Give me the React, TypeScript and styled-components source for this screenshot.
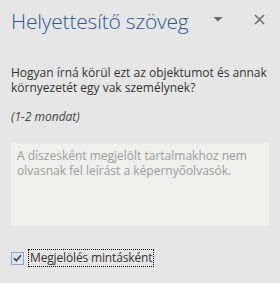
import React from 'react';
import styled, {createGlobalStyle} from 'styled-components';

const GlobalStyle = createGlobalStyle`
  html, body {
    margin: 0;
    padding: 0;
    background: #e6e6e6;
  }
  * {
    box-sizing: border-box;
  }
`;

const Pane = styled.div`
  width: 280px;
  height: 283px;
  background: #e6e6e6;
  font-family: 'Open Sans', 'Noto Sans', sans-serif;
  overflow: hidden;
`;

const Header = styled.div`
  display: flex;
  align-items: flex-start;
  padding: 7px 4px 0 11px;
`;

const Title = styled.h1`
  flex: 1;
  margin: 0;
  font-size: 21px;
  font-weight: 300;
  line-height: 28px;
  color: #2b579a;
  letter-spacing: -0.2px;
`;

const IconButton = styled.button<{$gap?: number}>`
  display: flex;
  align-items: center;
  justify-content: center;
  width: 30px;
  height: 24px;
  margin-right: ${p => p.$gap ?? 0}px;
  padding: 0;
  border: 0;
  background: transparent;
  color: #6b6b6b;
`;

const Body = styled.div`
  display: flex;
  flex-direction: column;
  padding: 0 11px;
`;

const Question = styled.p`
  margin: 30px 0 0;
  font-size: 12px;
  line-height: 15px;
  color: #333;
`;

const Hint = styled.p`
  margin: 14px 0 0;
  font-size: 12px;
  line-height: 15px;
  font-style: italic;
  color: #444;
`;

const Description = styled.textarea`
  margin-top: 19px;
  width: 258px;
  height: 83px;
  padding: 4px 5px;
  resize: none;
  border: 1px solid #ebebe9;
  background: #efefed;
  font-family: 'Open Sans', 'Noto Sans', sans-serif;
  font-size: 12px;
  line-height: 15px;
  color: #333;
  outline: none;

  &::placeholder {
    color: #9c9c9c;
  }
`;

const CheckRow = styled.label`
  display: flex;
  align-items: center;
  gap: 4px;
  margin-top: 23px;
`;

const Box = styled.span`
  display: flex;
  align-items: center;
  justify-content: center;
  width: 13px;
  height: 13px;
  border: 1px solid #8fa6cb;
  background: #dbe4f1;
`;

const CheckLabel = styled.span`
  padding: 0 1px;
  border: 1px dotted #000;
  font-size: 12px;
  letter-spacing: -0.15px;
  line-height: 16px;
  color: #333;
`;

export default function App() {
  return (
    <Pane>
      <GlobalStyle />
      <Header>
        <Title>Helyettesítő szöveg</Title>
        <IconButton aria-label="Beállítások" $gap={11}>
          <svg width="10" height="6" viewBox="0 0 10 6">
            <polygon points="0.5,1 9.5,1 5,5.5" fill="currentColor" />
          </svg>
        </IconButton>
        <IconButton aria-label="Bezárás" $gap={2}>
          <svg width="11" height="11" viewBox="0 0 11 11">
            <path
              d="M1 1 L10 10 M10 1 L1 10"
              stroke="currentColor"
              strokeWidth="1.6"
              fill="none"
            />
          </svg>
        </IconButton>
      </Header>
      <Body>
        <Question>
          Hogyan írná körül ezt az objektumot és annak környezetét egy vak
          személynek?
        </Question>
        <Hint>(1-2 mondat)</Hint>
        <Description placeholder="A díszesként megjelölt tartalmakhoz nem olvasnak fel leírást a képernyőolvasók." />
        <CheckRow>
          <Box>
            <svg width="9" height="8" viewBox="0 0 9 8">
              <path
                d="M1 4.2 L3.4 6.6 L8 1.2"
                stroke="#333"
                strokeWidth="1.4"
                fill="none"
              />
            </svg>
          </Box>
          <CheckLabel>Megjelölés mintásként</CheckLabel>
        </CheckRow>
      </Body>
    </Pane>
  );
}
